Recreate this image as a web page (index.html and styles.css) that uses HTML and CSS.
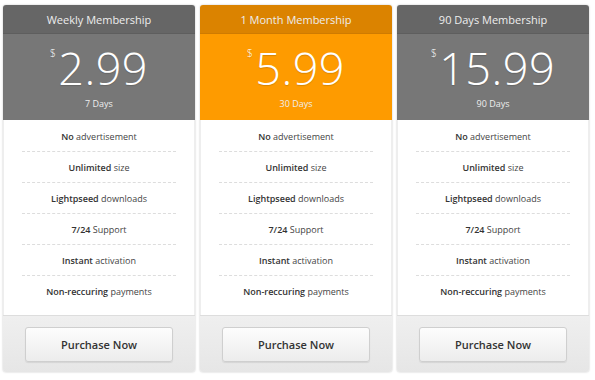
FILE: index.html
```html
<!DOCTYPE html>
<html lang="en">
<head>
    <meta charset="UTF-8">
    <title>Pricing</title>
    <link rel="stylesheet" href="styles.css">
</head>
<body>
    <div class="pricing">
        <div class="plan">
            <div class="plan-title">Weekly Membership</div>
            <div class="plan-price">
                <div class="amount"><span class="currency">$</span>2.99</div>
                <div class="period">7 Days</div>
            </div>
            <ul class="features">
                <li><b>No</b> advertisement</li>
                <li><b>Unlimited</b> size</li>
                <li><b>Lightpseed</b> downloads</li>
                <li><b>7/24</b> Support</li>
                <li><b>Instant</b> activation</li>
                <li><b>Non-reccuring</b> payments</li>
            </ul>
            <div class="plan-footer"><a href="#" class="btn">Purchase Now</a></div>
        </div>
        <div class="plan plan-featured">
            <div class="plan-title">1 Month Membership</div>
            <div class="plan-price">
                <div class="amount"><span class="currency">$</span>5.99</div>
                <div class="period">30 Days</div>
            </div>
            <ul class="features">
                <li><b>No</b> advertisement</li>
                <li><b>Unlimited</b> size</li>
                <li><b>Lightpseed</b> downloads</li>
                <li><b>7/24</b> Support</li>
                <li><b>Instant</b> activation</li>
                <li><b>Non-reccuring</b> payments</li>
            </ul>
            <div class="plan-footer"><a href="#" class="btn">Purchase Now</a></div>
        </div>
        <div class="plan">
            <div class="plan-title">90 Days Membership</div>
            <div class="plan-price">
                <div class="amount"><span class="currency">$</span>15.99</div>
                <div class="period">90 Days</div>
            </div>
            <ul class="features">
                <li><b>No</b> advertisement</li>
                <li><b>Unlimited</b> size</li>
                <li><b>Lightpseed</b> downloads</li>
                <li><b>7/24</b> Support</li>
                <li><b>Instant</b> activation</li>
                <li><b>Non-reccuring</b> payments</li>
            </ul>
            <div class="plan-footer"><a href="#" class="btn">Purchase Now</a></div>
        </div>
    </div>
</body>
</html>
```

FILE: styles.css
```css
* {
    margin: 0;
    padding: 0;
    box-sizing: border-box;
}

body {
    font-family: 'Open Sans', sans-serif;
    background: #fff;
    color: #333;
}

.pricing {
    display: flex;
    gap: 5px;
    padding: 5px 3px;
}

.plan {
    width: 192px;
    border-radius: 3px;
    overflow: hidden;
    background: #fff;
    box-shadow: 0 0 2px rgba(0, 0, 0, 0.25);
}

.plan-title {
    height: 29px;
    line-height: 29px;
    text-align: center;
    font-size: 11px;
    color: #eee;
    background: #666;
    border-bottom: 1px solid #5e5e5e;
}

.plan-price {
    height: 86px;
    background: #777;
    color: #fff;
    text-align: center;
    padding-top: 8px;
}

.amount {
    font-size: 45px;
    font-weight: 300;
    line-height: 52px;
    letter-spacing: 0.5px;
    text-shadow: 0 1px 1px rgba(0, 0, 0, 0.15);
}

.currency {
    font-size: 10px;
    vertical-align: top;
    line-height: 22px;
    margin-right: 2px;
}

.period {
    font-size: 9px;
    color: #eee;
    margin-top: 3px;
}

.plan-featured .plan-title {
    background: #db8300;
    border-bottom-color: #cf7b00;
}

.plan-featured .plan-price {
    background: #fe9b00;
}

.features {
    list-style: none;
    padding: 1px 18px 8px;
    border-left: 1px solid #eee;
    border-right: 1px solid #eee;
}

.features li {
    height: 31px;
    line-height: 31px;
    text-align: center;
    font-size: 9px;
    color: #444;
    border-bottom: 1px dashed #ddd;
}

.features li:last-child {
    border-bottom: none;
}

.features b {
    font-weight: 600;
    color: #333;
}

.plan-footer {
    height: 57px;
    background: linear-gradient(#efefef, #e6e6e6);
    border-top: 1px solid #ddd;
    padding: 11px 22px 0;
}

.btn {
    display: block;
    height: 35px;
    line-height: 33px;
    text-align: center;
    font-size: 11px;
    font-weight: 600;
    color: #333;
    text-decoration: none;
    background: linear-gradient(#fdfdfd, #ececec);
    border: 1px solid #cfcfcf;
    border-radius: 3px;
    box-shadow: 0 1px 1px rgba(0, 0, 0, 0.08);
}
```
